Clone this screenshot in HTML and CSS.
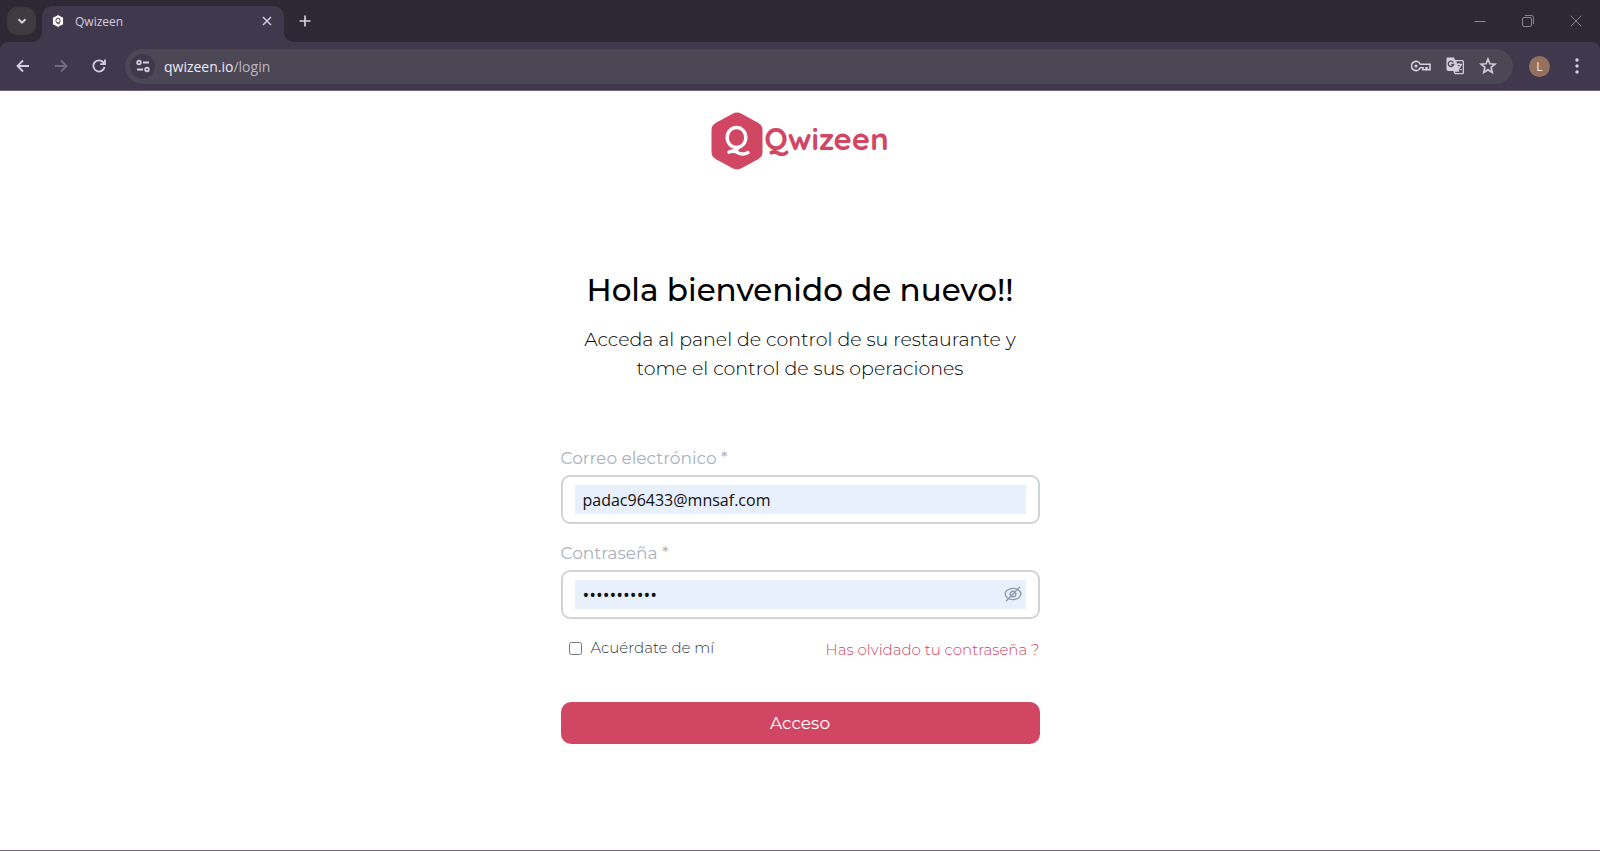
FILE: index.html
```html
<!DOCTYPE html>
<html lang="es">
<head>
  <meta charset="UTF-8">
  <meta name="viewport" content="width=device-width, initial-scale=1.0">
  <title>Qwizeen</title>
  <link rel="stylesheet" href="styles.css">
</head>
<body>
  <header class="browser">
    <div class="tabs">
      <button class="tab-search" type="button" aria-label="Buscar pestañas">
        <svg width="12" height="12" viewBox="0 0 12 12"><path d="M2.5 4.2 6 7.7l3.5-3.5" /></svg>
      </button>
      <div class="tab">
        <svg class="favicon" width="14" height="14" viewBox="0 0 14 14">
          <path d="M7 .6 12.6 3.600v6.800L7 13.400 1.400 10.400V3.600z" />
          <ellipse cx="7" cy="6.600" rx="2.100" ry="2.500" />
          <path class="tail" d="M5.800 9.400c1-.4 1.800 1 3 .3" />
        </svg>
        <span class="tab-title">Qwizeen</span>
        <button class="icon-btn" type="button" aria-label="Cerrar pestaña">
          <svg width="12" height="12" viewBox="0 0 12 12"><path d="m2 2 8 8M10 2l-8 8" /></svg>
        </button>
      </div>
      <button class="icon-btn new-tab" type="button" aria-label="Nueva pestaña">
        <svg width="12" height="12" viewBox="0 0 12 12"><path d="M6 .5v11M.5 6h11" /></svg>
      </button>
      <div class="window-buttons">
        <button type="button" aria-label="Minimizar">
          <svg width="12" height="12" viewBox="0 0 12 12"><path d="M.5 6.500h11" /></svg>
        </button>
        <button type="button" aria-label="Restaurar">
          <svg width="12" height="12" viewBox="0 0 12 12"><rect x=".5" y="2.500" width="9" height="9" rx="1.500" /><path d="M3 .5h6.500a2 2 0 0 1 2 2V9" /></svg>
        </button>
        <button type="button" aria-label="Cerrar">
          <svg width="12" height="12" viewBox="0 0 12 12"><path d="m.7.7 10.600 10.600M11.300.7.7 11.300" /></svg>
        </button>
      </div>
    </div>

    <div class="toolbar">
      <div class="nav">
        <button class="icon-btn" type="button" aria-label="Atrás">
          <svg width="14" height="14" viewBox="0 0 14 14"><path d="M13 7H1.500M7 1.500 1.500 7 7 12.500" /></svg>
        </button>
        <button class="icon-btn disabled" type="button" aria-label="Adelante" disabled>
          <svg width="14" height="14" viewBox="0 0 14 14"><path d="M1 7h11.500M7 1.500 12.500 7 7 12.500" /></svg>
        </button>
        <button class="icon-btn" type="button" aria-label="Recargar">
          <svg width="14" height="14" viewBox="0 0 14 14"><path d="M12.500 8A5.600 5.600 0 1 1 11.200 3.200L12.800 5M13 .5V5.200H8.300" /></svg>
        </button>
      </div>

      <div class="address">
        <button class="site-info" type="button" aria-label="Información del sitio">
          <svg width="14" height="14" viewBox="0 0 14 14"><circle cx="3" cy="3.500" r="1.800" /><path d="M7 3.500h6M1 10.500h6" /><circle cx="11" cy="10.500" r="1.800" /></svg>
        </button>
        <span class="url">qwizeen.io<span class="path">/login</span></span>
        <button class="icon-btn" type="button" aria-label="Contraseñas">
          <svg width="20" height="14" viewBox="0 0 20 14"><path d="M9.300 5.300A4.600 4.600 0 1 0 9.300 8.700H12v2h3v-2h1v2h3V5.300z" /><circle class="fill" cx="5" cy="7" r="1.600" /></svg>
        </button>
        <button class="icon-btn" type="button" aria-label="Traducir">
          <svg width="18" height="18" viewBox="0 0 18 18">
            <path class="fill" d="M1.500.500H8L9.300 4 12.500 14H2.200A1.700 1.700 0 0 1 .5 12.300V1.500a1 1 0 0 1 1-1z" />
            <path class="page-back" d="M9.500 3.700h6.800a1 1 0 0 1 1 1v11a1 1 0 0 1-1 1H9L8 14h4.500z" />
            <path class="cut" d="M7.300 5.400A2.700 2.700 0 1 0 7.600 7.500H5.300" />
            <path class="thin" d="M10.500 7.500H16M13 6v1.500M15 7.500c-.5 2.500-2 4.200-3.500 5.300M12 9c.7 1.600 1.800 2.800 3.500 4" />
          </svg>
        </button>
        <button class="icon-btn" type="button" aria-label="Añadir a marcadores">
          <svg width="18" height="18" viewBox="0 0 18 18"><path d="m9 2 1.900 4.800 5.100.4-3.900 3.300 1.200 5L9 12.800l-4.300 2.700 1.200-5L2 7.200l5.100-.4z" /></svg>
        </button>
      </div>

      <button class="avatar" type="button" aria-label="Perfil">L</button>
      <button class="icon-btn menu" type="button" aria-label="Menú">
        <svg width="4" height="16" viewBox="0 0 4 16"><circle class="fill" cx="2" cy="2" r="1.700" /><circle class="fill" cx="2" cy="8" r="1.700" /><circle class="fill" cx="2" cy="14" r="1.700" /></svg>
      </button>
    </div>
  </header>

  <main class="page">
    <div class="logo">
      <svg width="52" height="58" viewBox="0 0 52 58">
        <path class="hexagon" d="M21.500 1.700Q26-.6 30.500 1.700L47 10.700Q51.500 13.300 51.500 18V40Q51.500 44.700 47 47.300L30.500 56.300Q26 58.600 21.500 56.300L5 47.300Q.5 44.700.5 40V18Q.5 13.300 5 10.700z" />
        <ellipse class="mark" cx="25.500" cy="25.500" rx="9.300" ry="10" />
        <path class="mark" d="M22 39.500Q25.500 38.500 27.500 35.500" />
        <path class="mark" d="M18 40.200C22 37.500 25 39.500 28 41.200Q32.500 43.200 37 40.500" />
      </svg>
      <span class="logo-text">Qwizeen</span>
    </div>

    <h1>Hola bienvenido de nuevo!!</h1>
    <p class="subtitle">Acceda al panel de control de su restaurante y<br>tome el control de sus operaciones</p>

    <form class="login">
      <label class="field-label" for="correo">Correo electrónico *</label>
      <div class="field">
        <input type="email" id="correo" value="padac96433@mnsaf.com" required>
      </div>

      <label class="field-label" for="clave">Contraseña *</label>
      <div class="field">
        <input type="password" id="clave" value="contrasena1" required>
        <button class="toggle" type="button" aria-label="Mostrar contraseña">
          <svg width="18" height="16" viewBox="0 0 18 16"><ellipse cx="9" cy="8" rx="7.800" ry="5.600" /><circle cx="9" cy="8" r="2.800" /><path d="M16 .8 2 15.200" /></svg>
        </button>
      </div>

      <div class="options">
        <label class="remember" for="recordar"><input type="checkbox" id="recordar">Acuérdate de mí</label>
        <a class="forgot" href="#">Has olvidado tu contraseña ?</a>
      </div>

      <button class="submit" type="submit">Acceso</button>
    </form>
  </main>
</body>
</html>
```
FILE: styles.css
```css
* { box-sizing: border-box; }
body { margin: 0; min-height: 100vh; display: flex; flex-direction: column; background: #fff; color: #000; font-family: Montserrat, Inter, sans-serif; }
button { padding: 0; border: 0; background: none; font: inherit; color: inherit; }
svg { display: block; fill: none; stroke: currentColor; stroke-width: 2; }
svg .fill { fill: currentColor; stroke: none; }

/* Browser bar */
.browser { background: #2c2834; color: #d5cedf; font-family: "Open Sans", sans-serif; }
.tabs { display: flex; align-items: center; height: 42px; padding-left: 7px; }
.tab-search { display: flex; align-items: center; justify-content: center; width: 29px; height: 28px; border-radius: 10px; background: #3d3a40; }
.tab { position: relative; display: flex; align-items: center; align-self: flex-end; gap: 10px; width: 242px; height: 36px; margin-left: 6px; padding: 0 11px 6px 9px; border-radius: 10px 10px 0 0; background: #40384c; }
.tab::before, .tab::after { content: ""; position: absolute; bottom: 0; width: 10px; height: 10px; }
.tab::before { right: 100%; background: radial-gradient(circle at 0 0, #2c2834 10px, #40384c 10px); }
.tab::after { left: 100%; background: radial-gradient(circle at 100% 0, #2c2834 10px, #40384c 10px); }
.favicon { fill: #fff; stroke: #40384c; stroke-width: 1; }
.favicon .tail { fill: none; }
.tab-title { flex: 1; font-size: 12px; }
.icon-btn { display: flex; align-items: center; justify-content: center; }
.tab .icon-btn svg { stroke-width: 1.5; }
.new-tab { margin-left: 15px; }
.new-tab svg { stroke-width: 1.7; }
.window-buttons { display: flex; margin-left: auto; color: #8a8591; }
.window-buttons button { display: flex; align-items: center; justify-content: center; width: 48px; height: 40px; }
.window-buttons svg { stroke-width: 1; }

.toolbar { display: flex; align-items: center; height: 49px; padding: 0 21px 0 16px; border-radius: 8px 8px 0 0; border-bottom: 1px solid #6c6574; background: #40384c; }
.nav { display: flex; gap: 24px; }
.nav svg { stroke-width: 1.8; }
.disabled { color: #736b7e; }
.address { display: flex; flex: 1; align-items: center; gap: 15px; height: 35px; margin-left: 19px; padding: 0 16px 0 5px; border-radius: 18px; background: #4b4754; }
.address svg { stroke-width: 1.6; }
.address .site-info svg { stroke-width: 1.8; }
.address .thin, .address .page-back { stroke-width: 1.3; }
.address .cut { stroke: #4b4754; stroke-width: 1.3; }
.site-info { display: flex; align-items: center; justify-content: center; width: 25px; height: 25px; border-radius: 50%; background: #40384c; }
.url { flex: 1; margin-left: -6px; font-size: 14px; color: #eee9f4; }
.path { color: #bcb5c4; }
.avatar { width: 21px; height: 21px; margin-left: 16px; border-radius: 50%; background: #94705f; font-size: 12px; line-height: 21px; color: #f4ece8; }
.menu { margin-left: 25px; }

/* Login page */
.page { display: flex; flex: 1; flex-direction: column; align-items: center; padding-top: 21px; border-bottom: 1px solid #706a76; }
.logo { display: flex; align-items: center; gap: 1px; color: #d14663; }
.logo .hexagon { fill: #d14663; stroke: none; }
.logo .mark { stroke: #fff; stroke-width: 3.4; stroke-linecap: round; }
.logo-text { padding-bottom: 5px; font-family: Quicksand, Lato, sans-serif; font-size: 31px; font-weight: 700; line-height: 41px; }
h1 { margin: 98px 0 0; font-size: 31px; font-weight: 500; line-height: 44px; }
.subtitle { margin: 13px 0 0; font-size: 19px; font-weight: 300; line-height: 29px; text-align: center; }
.login { width: 100%; max-width: 479px; margin-top: 63px; }
.field-label { display: block; font-size: 17px; font-weight: 400; line-height: 24px; color: #a9b1be; }
.field { position: relative; height: 49px; margin: 5px 0 17px; padding: 8px 12px; border: 2px solid #d2d3d6; border-radius: 9px; }
.field input { display: block; width: 100%; height: 29px; padding: 0 8px; border: 0; outline: 0; background: #e8f0fe; color: #111; font-family: "Open Sans", sans-serif; font-size: 16px; }
.field input[type="password"] { font-size: 18px; }
.toggle { position: absolute; top: 14px; right: 16px; color: #8d9cab; }
.toggle svg { stroke-width: 1.4; }
.options { display: flex; align-items: flex-start; justify-content: space-between; height: 30px; padding-top: 2px; font-size: 15px; font-weight: 300; line-height: 20px; }
.remember { display: flex; align-items: center; gap: 9px; padding-left: 8px; color: #303848; }
.remember input { width: 13px; height: 13px; margin: 0; }
.forgot { line-height: 24px; color: #d14663; text-decoration: none; }
.submit { display: block; width: 100%; height: 42px; margin-top: 36px; border-radius: 10px; background: #d14663; color: #fff; font-size: 17px; font-weight: 400; }
```
